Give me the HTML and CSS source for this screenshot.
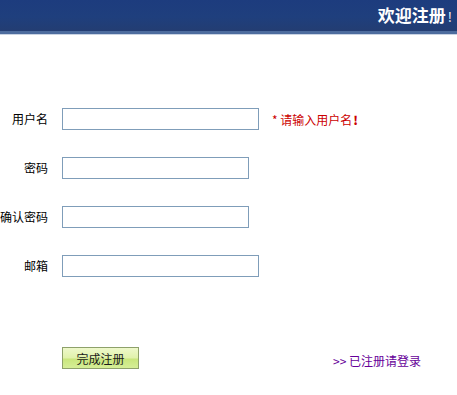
FILE: index.html
```html
<!DOCTYPE html>
<html lang="zh">
<head>
<meta charset="utf-8">
<title>欢迎注册</title>
<link rel="stylesheet" href="styles.css">
</head>
<body>
<div class="header">
  <h1 class="title">欢迎注册<span class="bang">!</span></h1>
</div>
<form class="reg">
  <div class="row">
    <label class="lbl">用户名</label>
    <input class="field field-long" type="text">
    <span class="err">* 请输入用户名<b class="err-mark">!</b></span>
  </div>
  <div class="row">
    <label class="lbl">密码</label>
    <input class="field field-short" type="password">
  </div>
  <div class="row">
    <label class="lbl">确认密码</label>
    <input class="field field-short" type="password">
  </div>
  <div class="row">
    <label class="lbl">邮箱</label>
    <input class="field field-long" type="text">
  </div>
  <div class="actions">
    <button class="submit" type="button">完成注册</button>
    <a class="login" href="#">&gt;&gt; 已注册请登录</a>
  </div>
</form>
</body>
</html>
```

FILE: styles.css
```css
html, body {
  margin: 0;
  padding: 0;
  background: #ffffff;
}
body {
  font-family: "Noto Sans CJK SC", "Liberation Sans", sans-serif;
  font-size: 12px;
  color: #000000;
}
.header {
  height: 31px;
  background: linear-gradient(to bottom, #1d3c7e 0%, #1f3f7d 55%, #233d72 100%);
  border-bottom: 3px solid #4d6c9e;
  box-shadow: 0 1px 0 #c9d3e3;
  display: flex;
  justify-content: flex-end;
  align-items: center;
}
.title {
  margin: 0;
  padding-right: 5px;
  font-size: 17px;
  font-weight: bold;
  color: #ffffff;
  line-height: 20px;
}
.bang {
  font-size: 13px;
  font-weight: normal;
  margin-left: 2px;
}
.reg {
  margin: 0;
  padding-top: 74px;
}
.row {
  display: flex;
  align-items: center;
  height: 22px;
  margin-bottom: 27px;
}
.lbl {
  width: 48px;
  text-align: right;
  margin-right: 14px;
  line-height: 22px;
}
.field {
  box-sizing: border-box;
  height: 22px;
  border: 1px solid #7f9db9;
  background: #ffffff;
  margin: 0;
  padding: 0 2px;
  font: inherit;
}
.field-long {
  width: 197px;
}
.field-short {
  width: 187px;
}
.err {
  margin-left: 13px;
  color: #cc0000;
}
.err-mark {
  font-weight: 900;
  color: #cc0000;
  margin-left: 1px;
}
.actions {
  display: flex;
  align-items: flex-start;
  padding-left: 62px;
  margin-top: 70px;
}
.submit {
  box-sizing: border-box;
  width: 77px;
  height: 22px;
  margin: 0;
  padding: 0;
  border: 1px solid #8ea16a;
  background: linear-gradient(to bottom, #eef8cb 0%, #e1f2ab 50%, #c9e67c 55%, #d6ee97 100%);
  font: inherit;
  color: #1a1a1a;
  cursor: pointer;
}
.login {
  margin-left: 194px;
  margin-top: 6px;
  color: #660099;
  text-decoration: none;
  line-height: 16px;
}
```
